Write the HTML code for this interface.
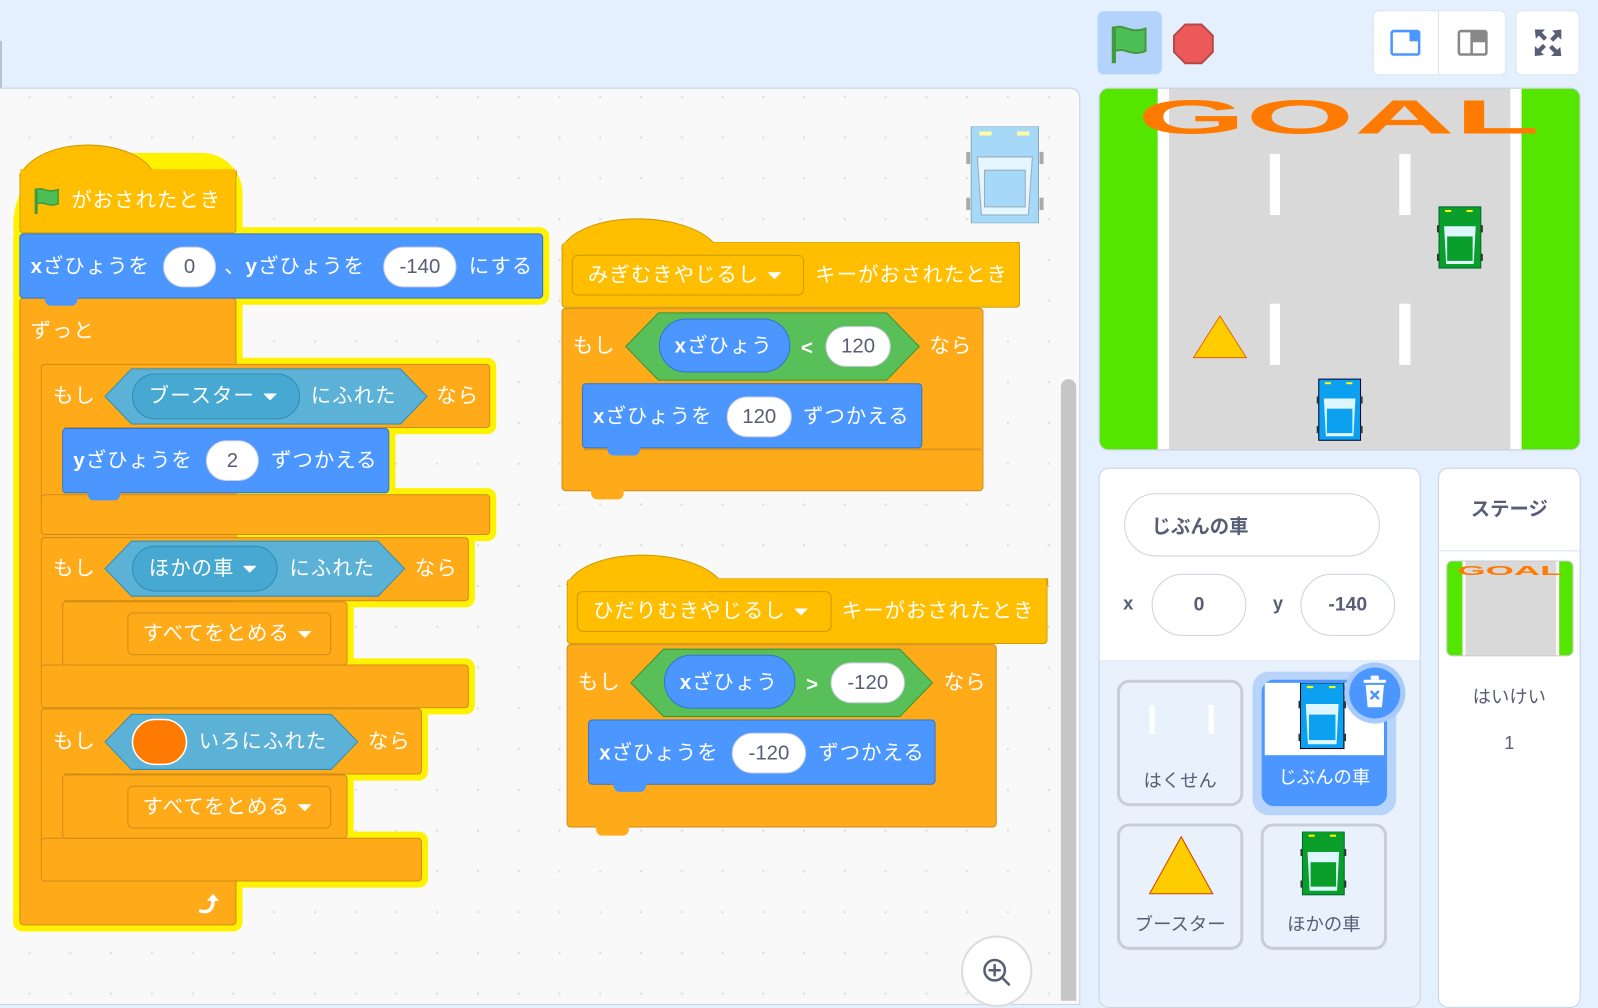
<!DOCTYPE html>
<html><head><meta charset="utf-8">
<style>
*{box-sizing:border-box;margin:0;padding:0}
html,body{width:1598px;height:992px;overflow:hidden;background:#e5f0ff}
#w{position:absolute;left:0;top:0;width:1568px;height:973px;transform:scale(1.01913);transform-origin:0 0;font-family:"Liberation Sans","Noto Sans CJK JP",sans-serif}
.a{position:absolute}
.t{position:absolute;color:#fff;font-size:20px;white-space:nowrap;line-height:24px;letter-spacing:1px}
.g{position:absolute;background:#fff200;border-radius:9px}
.hat{background:#ffbf00;border:1px solid #cc9900}
.ctl{background:#ffab19;border:1px solid #cf8b17}
.mot{background:#4c97ff;border:1px solid #3373cc}
.inp{position:absolute;background:#fff;border:1px solid #ccd;border-radius:20px;color:#575e75;font-size:20px;text-align:center;line-height:38px}
.hex{position:absolute}
.dd{position:absolute;border:1px solid #cc9900;border-radius:6px;background:#ffbf00}
.tri{display:inline-block;width:0;height:0;border-left:7px solid transparent;border-right:7px solid transparent;border-top:7px solid #fff;vertical-align:middle;margin-left:8px;border-radius:2px}
.card{position:absolute;background:#e9f1fc;border:3px solid #c8ced9;border-radius:12px}
.lbl{position:absolute;width:100%;text-align:center;font-size:18px;color:#575e75}
</style></head><body><div id="w">
<!-- workspace -->
<div class="a" style="left:-10px;top:86px;width:1070px;height:900px;background:#f9f9f9;border:1px solid #c7d1e0;border-radius:0 10px 0 0;background-image:radial-gradient(#ddd 1px,transparent 1.3px);background-size:40px 40px;background-position:18px 28px"></div>
<div class="a" style="left:0;top:40px;width:2px;height:46px;background:#b8c2d0"></div>
<div class="a" style="left:1041px;top:372px;width:15px;height:610px;background:#c6c6c6;border-radius:8px 8px 0 0"></div>
<!-- ghost sprite -->
<svg class="a" style="left:948px;top:124px" width="76" height="95" viewBox="0 0 76 95"><rect x="5" y="0" width="66" height="95" fill="#a6d8f8" stroke="#8ab" /><rect x="0" y="25" width="4" height="12" fill="#aaa"/><rect x="72" y="25" width="4" height="12" fill="#aaa"/><rect x="0" y="70" width="4" height="12" fill="#aaa"/><rect x="72" y="70" width="4" height="12" fill="#aaa"/><rect x="13" y="5" width="12" height="4" fill="#ffffa0"/><rect x="50" y="5" width="12" height="4" fill="#ffffa0"/><polygon points="11,30 65,30 61,87 15,87" fill="#e5f6ff" stroke="#9ab"/><rect x="18" y="43" width="40" height="36" fill="#a6d8f8" stroke="#9ab"/></svg>
<!-- zoom button -->
<div class="a" style="left:943px;top:918px;width:70px;height:70px;border-radius:50%;background:#fff;border:2px solid #ddd"></div>
<svg class="a" style="left:960px;top:936px" width="36" height="36" viewBox="0 0 36 36"><circle cx="16" cy="16" r="10" fill="none" stroke="#575e75" stroke-width="2.5"/><path d="M11 16h10M16 11v10M23 23l7 7" stroke="#575e75" stroke-width="2.5" stroke-linecap="round"/></svg>

<!-- ===== Script 1 glow ===== -->
<div class="g" style="left:13px;top:150px;width:225px;height:84px;border-radius:70px 40px 9px 9px"></div>
<div class="g" style="left:13px;top:223px;width:526px;height:76px"></div>
<div class="g" style="left:13px;top:287px;width:225px;height:74px"></div>
<div class="g" style="left:13px;top:287px;width:33px;height:627px"></div>
<div class="g" style="left:13px;top:859px;width:225px;height:55px"></div>
<div class="g" style="left:34px;top:351px;width:453px;height:75px"></div>
<div class="g" style="left:34px;top:351px;width:33px;height:520px"></div>
<div class="g" style="left:55px;top:414px;width:333px;height:76px"></div>
<div class="g" style="left:34px;top:479px;width:453px;height:52px"></div>
<div class="g" style="left:34px;top:521px;width:432px;height:75px"></div>
<div class="g" style="left:55px;top:584px;width:292px;height:74px"></div>
<div class="g" style="left:34px;top:646px;width:432px;height:55px"></div>
<div class="g" style="left:34px;top:689px;width:386px;height:77px"></div>
<div class="g" style="left:55px;top:754px;width:292px;height:74px"></div>
<div class="g" style="left:34px;top:816px;width:386px;height:55px"></div>

<!-- hat -->
<div class="a hat" style="left:19px;top:168px;width:213px;height:61px;border-radius:4px 4px 4px 4px;border-top:none"></div>
<svg class="a" style="left:18px;top:139px" width="216" height="34" viewBox="0 0 216 34"><path d="M1 34 C 20 -6, 110 -6, 132 29 L 214 29 L 214 34 Z" fill="#ffbf00" stroke="#cc9900"/></svg>
<div class="a" style="left:20px;top:166px;width:211px;height:8px;background:#ffbf00"></div>
<svg class="a" style="left:32px;top:183px" width="28" height="28" viewBox="0 0 28 28"><path d="M3 26V3c7-3 11 4 22 0v14c-10 4-14-3-20 0" fill="#4cbf56" stroke="#45993d" stroke-width="1.5"/><rect x="2" y="2" width="3" height="25" fill="#45993d"/></svg>
<div class="t" style="left:70px;top:185px">がおされたとき</div>
<!-- forever -->
<div class="a ctl" style="left:19px;top:292px;width:213px;height:616px;border-radius:4px"></div>
<div class="t" style="left:30px;top:313px">ずっと</div>
<svg class="a" style="left:194px;top:874px" width="26" height="24" viewBox="0 0 26 24"><path d="M3 20c8 2 12-2 12-10" fill="none" stroke="#fff" stroke-width="3.5" stroke-linecap="round"/><path d="M9 10l6-7 6 7z" fill="#fff"/></svg>
<!-- goto -->
<div class="a mot" style="left:19px;top:229px;width:514px;height:64px;border-radius:4px"></div>
<div class="a" style="left:44px;top:290px;width:32px;height:10px;background:#4c97ff;border-radius:0 0 6px 6px"></div>
<div class="t" style="left:30px;top:250px"><b>x</b>ざひょうを</div>
<div class="inp" style="left:160px;top:242px;width:52px;height:40px">0</div>
<div class="t" style="left:220px;top:250px">、<b>y</b>ざひょうを</div>
<div class="inp" style="left:376px;top:242px;width:72px;height:40px">-140</div>
<div class="t" style="left:460px;top:250px">にする</div>

<!-- if 1 -->
<div class="a ctl" style="left:40px;top:357px;width:441px;height:63px;border-radius:4px"></div>
<div class="a ctl" style="left:40px;top:418px;width:23px;height:70px;border-width:0 0 0 1px"></div>
<div class="a ctl" style="left:40px;top:485px;width:441px;height:40px;border-radius:4px"></div>
<div class="t" style="left:52px;top:377px">もし</div>
<svg class="hex" style="left:102px;top:361px" width="318" height="56"><polygon points="1,28 27,1 291,1 317,28 291,55 27,55" fill="#5cb1d6" stroke="#2e8eb8"/><rect x="28" y="6" width="164" height="44" rx="22" fill="#47a8d1" stroke="#2e8eb8"/></svg>
<div class="t" style="left:146px;top:377px">ブースター<span class="tri"></span></div>
<div class="t" style="left:305px;top:377px">にふれた</div>
<div class="t" style="left:428px;top:377px">なら</div>
<div class="a mot" style="left:61px;top:420px;width:321px;height:64px;border-radius:4px"></div>
<div class="a" style="left:86px;top:481px;width:32px;height:10px;background:#4c97ff;border-radius:0 0 6px 6px"></div>
<div class="t" style="left:72px;top:440px"><b>y</b>ざひょうを</div>
<div class="inp" style="left:202px;top:432px;width:52px;height:40px">2</div>
<div class="t" style="left:266px;top:440px">ずつかえる</div>

<!-- if 2 -->
<div class="a ctl" style="left:40px;top:527px;width:420px;height:63px;border-radius:4px"></div>
<div class="a ctl" style="left:40px;top:588px;width:23px;height:66px;border-width:0 0 0 1px"></div>
<div class="a ctl" style="left:40px;top:652px;width:420px;height:43px;border-radius:4px"></div>
<div class="t" style="left:52px;top:546px">もし</div>
<svg class="hex" style="left:102px;top:530px" width="296" height="56"><polygon points="1,28 27,1 269,1 295,28 269,55 27,55" fill="#5cb1d6" stroke="#2e8eb8"/><rect x="28" y="6" width="142" height="44" rx="22" fill="#47a8d1" stroke="#2e8eb8"/></svg>
<div class="t" style="left:146px;top:546px">ほかの車<span class="tri"></span></div>
<div class="t" style="left:284px;top:546px">にふれた</div>
<div class="t" style="left:407px;top:546px">なら</div>
<div class="a ctl" style="left:61px;top:590px;width:280px;height:63px;border-radius:4px"></div>
<div class="a ctl" style="left:125px;top:601px;width:200px;height:42px;border-radius:5px;border-color:#cf8b17"></div>
<div class="t" style="left:140px;top:610px">すべてをとめる<span class="tri"></span></div>

<!-- if 3 -->
<div class="a ctl" style="left:40px;top:695px;width:374px;height:65px;border-radius:4px"></div>
<div class="a ctl" style="left:40px;top:758px;width:23px;height:66px;border-width:0 0 0 1px"></div>
<div class="a ctl" style="left:40px;top:822px;width:374px;height:43px;border-radius:4px"></div>
<div class="t" style="left:52px;top:716px">もし</div>
<svg class="hex" style="left:102px;top:700px" width="250" height="56"><polygon points="1,28 27,1 223,1 249,28 223,55 27,55" fill="#5cb1d6" stroke="#2e8eb8"/><rect x="28" y="6" width="53" height="44" rx="22" fill="#ff7a00" stroke="#fff" stroke-width="1.5"/></svg>
<div class="t" style="left:195px;top:716px">いろにふれた</div>
<div class="t" style="left:361px;top:716px">なら</div>
<div class="a ctl" style="left:61px;top:760px;width:280px;height:63px;border-radius:4px"></div>
<div class="a ctl" style="left:125px;top:771px;width:200px;height:42px;border-radius:5px"></div>
<div class="t" style="left:140px;top:780px">すべてをとめる<span class="tri"></span></div>

<!-- ===== Script 2 ===== -->
<svg class="a" style="left:550px;top:214px" width="454" height="30" viewBox="0 0 454 30"><path d="M1 30 C 20 -8, 120 -8, 150 24 L 450 24 L 450 30 Z" fill="#ffbf00" stroke="#cc9900"/></svg>
<div class="a hat" style="left:551px;top:238px;width:450px;height:64px;border-radius:4px;border-top:none"></div>
<div class="dd" style="left:561px;top:250px;width:228px;height:40px"></div>
<div class="t" style="left:577px;top:258px">みぎむきやじるし<span class="tri"></span></div>
<div class="t" style="left:800px;top:258px">キーがおされたとき</div>
<div class="a ctl" style="left:551px;top:302px;width:414px;height:180px;border-radius:4px"></div>
<div class="a" style="left:580px;top:480px;width:32px;height:10px;background:#ffab19;border-radius:0 0 6px 6px"></div>
<div class="a" style="left:573px;top:440px;width:390px;height:2px;background:#cf8b17;opacity:.6"></div>
<div class="t" style="left:562px;top:328px">もし</div>
<svg class="hex" style="left:613px;top:306px" width="290" height="68"><polygon points="1,34 33,1 257,1 289,34 257,67 33,67" fill="#59c059" stroke="#389438"/><rect x="34" y="7" width="128" height="52" rx="26" fill="#4c97ff" stroke="#3373cc"/></svg>
<div class="t" style="left:662px;top:328px"><b>x</b>ざひょう</div>
<div class="t" style="left:786px;top:330px;font-weight:bold">&lt;</div>
<div class="inp" style="left:810px;top:320px;width:64px;height:40px">120</div>
<div class="t" style="left:912px;top:328px">なら</div>
<div class="a mot" style="left:571px;top:376px;width:334px;height:64px;border-radius:4px"></div>
<div class="a" style="left:596px;top:437px;width:32px;height:10px;background:#4c97ff;border-radius:0 0 6px 6px"></div>
<div class="t" style="left:582px;top:397px"><b>x</b>ざひょうを</div>
<div class="inp" style="left:713px;top:389px;width:64px;height:40px">120</div>
<div class="t" style="left:788px;top:397px">ずつかえる</div>

<!-- ===== Script 3 ===== -->
<svg class="a" style="left:555px;top:544px" width="476" height="30" viewBox="0 0 476 30"><path d="M1 30 C 20 -8, 120 -8, 150 24 L 473 24 L 473 30 Z" fill="#ffbf00" stroke="#cc9900"/></svg>
<div class="a hat" style="left:556px;top:568px;width:472px;height:64px;border-radius:4px;border-top:none"></div>
<div class="dd" style="left:566px;top:580px;width:250px;height:40px"></div>
<div class="t" style="left:582px;top:588px">ひだりむきやじるし<span class="tri"></span></div>
<div class="t" style="left:826px;top:588px">キーがおされたとき</div>
<div class="a ctl" style="left:556px;top:632px;width:422px;height:180px;border-radius:4px"></div>
<div class="a" style="left:585px;top:810px;width:32px;height:10px;background:#ffab19;border-radius:0 0 6px 6px"></div>
<div class="t" style="left:567px;top:658px">もし</div>
<svg class="hex" style="left:618px;top:636px" width="298" height="68"><polygon points="1,34 33,1 265,1 297,34 265,67 33,67" fill="#59c059" stroke="#389438"/><rect x="34" y="7" width="128" height="52" rx="26" fill="#4c97ff" stroke="#3373cc"/></svg>
<div class="t" style="left:667px;top:658px"><b>x</b>ざひょう</div>
<div class="t" style="left:791px;top:660px;font-weight:bold">&gt;</div>
<div class="inp" style="left:815px;top:650px;width:73px;height:40px">-120</div>
<div class="t" style="left:926px;top:658px">なら</div>
<div class="a mot" style="left:577px;top:706px;width:341px;height:64px;border-radius:4px"></div>
<div class="a" style="left:602px;top:767px;width:32px;height:10px;background:#4c97ff;border-radius:0 0 6px 6px"></div>
<div class="t" style="left:588px;top:727px"><b>x</b>ざひょうを</div>
<div class="inp" style="left:718px;top:719px;width:73px;height:40px">-120</div>
<div class="t" style="left:803px;top:727px">ずつかえる</div>

<!-- ===== Top right controls ===== -->
<div class="a" style="left:1077px;top:11px;width:63px;height:62px;background:#b3d3fc;border-radius:6px"></div>
<svg class="a" style="left:1088px;top:22px" width="42" height="42" viewBox="0 0 42 42"><path d="M4 40V6c10-6 16 6 32 0v22c-14 6-20-4-30 0" fill="#4cbf56" stroke="#45993d" stroke-width="2"/><rect x="3" y="4" width="4" height="36" fill="#45993d"/></svg>
<svg class="a" style="left:1150px;top:22px" width="42" height="42" viewBox="0 0 42 42"><polygon points="13,2 29,2 40,13 40,29 29,40 13,40 2,29 2,13" fill="#ec5959" stroke="#b84848" stroke-width="2"/></svg>
<div class="a" style="left:1347px;top:10px;width:131px;height:64px;background:#fff;border:1px solid #d9e3f2;border-radius:6px"></div>
<div class="a" style="left:1411px;top:10px;width:1px;height:64px;background:#d9e3f2"></div>
<svg class="a" style="left:1364px;top:29px" width="30" height="26"><rect x="1.5" y="1.5" width="27" height="23" rx="2" fill="none" stroke="#4c97ff" stroke-width="2.5"/><rect x="19" y="1.5" width="9.5" height="10" fill="#4c97ff"/></svg>
<svg class="a" style="left:1430px;top:29px" width="30" height="26"><rect x="1.5" y="1.5" width="27" height="23" rx="2" fill="none" stroke="#888" stroke-width="2.5"/><rect x="14" y="1.5" width="14.5" height="11" fill="#888"/><line x1="14" y1="1" x2="14" y2="25" stroke="#888" stroke-width="2.5"/></svg>
<div class="a" style="left:1487px;top:10px;width:63px;height:64px;background:#fff;border:1px solid #d9e3f2;border-radius:6px"></div>
<svg class="a" style="left:1504px;top:27px" width="30" height="30" viewBox="0 0 30 30" fill="#575e75"><path d="M2 2h10l-3 3 5 5-3 3-5-5-3 3zM28 2v10l-3-3-5 5-3-3 5-5-3-3zM2 28V18l3 3 5-5 3 3-5 5 3 3zM28 28H18l3-3-5-5 3-3 5 5 3-3z"/></svg>

<!-- ===== Stage ===== -->
<div class="a" style="left:1078px;top:86px;width:473px;height:356px;border:1px solid #c7d1e0;border-radius:10px;overflow:hidden;background:#d9d9d9">
<svg width="471" height="354" viewBox="0 0 471 354">
<rect x="0" y="0" width="57" height="354" fill="#55e600"/><rect x="57" y="0" width="11" height="354" fill="#fff"/>
<rect x="403" y="0" width="11" height="354" fill="#fff"/><rect x="414" y="0" width="57" height="354" fill="#55e600"/>
<text x="37" y="44" font-family="Liberation Sans,sans-serif" font-weight="bold" font-size="47" fill="#ff7a00" textLength="395" lengthAdjust="spacingAndGlyphs">GOAL</text>
<rect x="167" y="64" width="10" height="60" fill="#fff"/><rect x="294" y="64" width="11" height="60" fill="#fff"/>
<rect x="167" y="211" width="10" height="60" fill="#fff"/><rect x="294" y="211" width="11" height="60" fill="#fff"/>
<polygon points="118,223 92,264 144,264" fill="#ffcc00" stroke="#e05000" stroke-width="0.8"/>
<g transform="translate(331,116)"><rect x="2" y="0" width="41" height="60" fill="#0a9f2a" stroke="#063"/><rect x="0" y="18" width="2" height="7" fill="#333"/><rect x="43" y="18" width="2" height="7" fill="#333"/><rect x="0" y="46" width="2" height="7" fill="#333"/><rect x="43" y="46" width="2" height="7" fill="#333"/><rect x="8" y="3" width="6" height="2" fill="#ff0"/><rect x="29" y="3" width="6" height="2" fill="#ff0"/><polygon points="7,19 38,19 36,56 9,56" fill="#ddf6ff"/><rect x="10" y="29" width="25" height="24" fill="#0a9f2a"/></g>
<g transform="translate(213,285)"><rect x="2" y="0" width="41" height="60" fill="#0ca0f0" stroke="#003"/><rect x="0" y="17" width="2" height="7" fill="#333"/><rect x="43" y="17" width="2" height="7" fill="#333"/><rect x="0" y="46" width="2" height="7" fill="#333"/><rect x="43" y="46" width="2" height="7" fill="#333"/><rect x="8" y="3" width="6" height="2" fill="#ff0"/><rect x="29" y="3" width="6" height="2" fill="#ff0"/><polygon points="7,19 38,19 36,56 9,56" fill="#ddf6ff"/><rect x="10" y="29" width="25" height="24" fill="#0ca0f0"/></g>
</svg></div>

<!-- ===== Sprite panel ===== -->
<div class="a" style="left:1078px;top:459px;width:316px;height:530px;background:#e9f1fc;border:1px solid #c7d1e0;border-radius:10px;overflow:hidden">
<div style="height:189px;background:#fff;border-bottom:1px solid #d9e3f2"></div></div>
<div class="a" style="left:1103px;top:484px;width:251px;height:62px;border:1px solid #ccd3df;border-radius:31px;background:#fff"></div>
<div class="a" style="left:1130px;top:502px;font-size:19px;font-weight:bold;color:#575e75">じぶんの車</div>
<div class="a" style="left:1102px;top:582px;font-size:18px;font-weight:bold;color:#575e75">x</div>
<div class="a" style="left:1130px;top:563px;width:93px;height:61px;border:1px solid #ccd3df;border-radius:31px;background:#fff;text-align:center;line-height:59px;font-size:19px;font-weight:bold;color:#575e75">0</div>
<div class="a" style="left:1249px;top:582px;font-size:18px;font-weight:bold;color:#575e75">y</div>
<div class="a" style="left:1276px;top:563px;width:93px;height:61px;border:1px solid #ccd3df;border-radius:31px;background:#fff;text-align:center;line-height:59px;font-size:19px;font-weight:bold;color:#575e75">-140</div>

<div class="card" style="left:1096px;top:667px;width:124px;height:124px"><div class="a" style="left:29px;top:22px;width:5px;height:28px;background:#fff"></div><div class="a" style="left:87px;top:22px;width:5px;height:28px;background:#fff"></div><div class="lbl" style="top:82px">はくせん</div></div>
<div class="a" style="left:1229px;top:659px;width:141px;height:141px;border-radius:16px;background:#b8d4fb"></div>
<div class="a" style="left:1238px;top:667px;width:123px;height:124px;border-radius:12px;background:#4c97ff;overflow:hidden"><div style="margin:3px;height:71px;background:#fff"></div><div class="lbl" style="top:82px;color:#fff">じぶんの車</div></div>
<svg class="a" style="left:1274px;top:670px" width="50" height="68"><g transform="scale(1.04)"><rect x="2" y="0" width="41" height="62" fill="#0ca0f0" stroke="#002"/><rect x="0" y="17" width="2" height="7" fill="#333"/><rect x="43" y="17" width="2" height="7" fill="#333"/><rect x="0" y="48" width="2" height="7" fill="#333"/><rect x="43" y="48" width="2" height="7" fill="#333"/><rect x="8" y="3" width="6" height="2" fill="#ff0"/><rect x="29" y="3" width="6" height="2" fill="#ff0"/><polygon points="7,20 38,20 36,58 9,58" fill="#ddf6ff"/><rect x="10" y="30" width="25" height="24" fill="#0ca0f0"/></g></svg>
<div class="a" style="left:1319px;top:650px;width:60px;height:60px;border-radius:50%;background:#a9cbfb"></div>
<div class="a" style="left:1324px;top:655px;width:50px;height:50px;border-radius:50%;background:#4c97ff"></div>
<svg class="a" style="left:1335px;top:662px" width="28" height="34" viewBox="0 0 28 34"><rect x="3" y="5" width="22" height="3" rx="1" fill="#fff"/><rect x="10" y="1" width="8" height="4" rx="1" fill="#fff"/><path d="M5 10h18l-2 22H7z" fill="#fff"/><path d="M10 16l8 8M18 16l-8 8" stroke="#4c97ff" stroke-width="2.5"/></svg>
<div class="card" style="left:1096px;top:808px;width:124px;height:124px"><svg class="a" style="left:27px;top:8px" width="66" height="60"><polygon points="33,2 2,58 64,58" fill="#ffcc00" stroke="#d54000"/></svg><div class="lbl" style="top:82px">ブースター</div></div>
<div class="card" style="left:1237px;top:808px;width:124px;height:124px"><svg class="a" style="left:36px;top:5px" width="46" height="64"><rect x="2" y="0" width="41" height="62" fill="#0a9f2a" stroke="#063"/><rect x="0" y="17" width="2" height="7" fill="#333"/><rect x="43" y="17" width="2" height="7" fill="#333"/><rect x="0" y="48" width="2" height="7" fill="#333"/><rect x="43" y="48" width="2" height="7" fill="#333"/><rect x="8" y="3" width="6" height="2" fill="#ff0"/><rect x="29" y="3" width="6" height="2" fill="#ff0"/><polygon points="7,20 38,20 36,58 9,58" fill="#ddf6ff"/><rect x="10" y="30" width="25" height="24" fill="#0a9f2a"/></svg><div class="lbl" style="top:82px">ほかの車</div></div>

<!-- stage panel -->
<div class="a" style="left:1411px;top:459px;width:140px;height:530px;background:#fff;border:1px solid #c7d1e0;border-radius:10px"></div>
<div class="a" style="left:1411px;top:540px;width:140px;height:1px;background:#d9e3f2"></div>
<div class="a" style="left:1411px;top:485px;width:140px;text-align:center;font-size:19px;font-weight:bold;color:#575e75">ステージ</div>
<div class="a" style="left:1419px;top:550px;width:125px;height:94px;border-radius:6px;overflow:hidden;background:#d9d9d9;border:1px solid #ccc">
<svg width="125" height="94"><rect width="15" height="94" fill="#55e600"/><rect x="15" width="3" height="94" fill="#fff"/><rect x="107" width="3" height="94" fill="#fff"/><rect x="110" width="15" height="94" fill="#55e600"/><text x="10" y="13" font-family="Liberation Sans,sans-serif" font-weight="bold" font-size="13" fill="#ff7a00" textLength="103" lengthAdjust="spacingAndGlyphs">GOAL</text></svg></div>
<div class="a" style="left:1411px;top:670px;width:140px;text-align:center;font-size:18px;color:#575e75">はいけい</div>
<div class="a" style="left:1411px;top:719px;width:140px;text-align:center;font-size:18px;color:#575e75">1</div>
</div></body></html>
